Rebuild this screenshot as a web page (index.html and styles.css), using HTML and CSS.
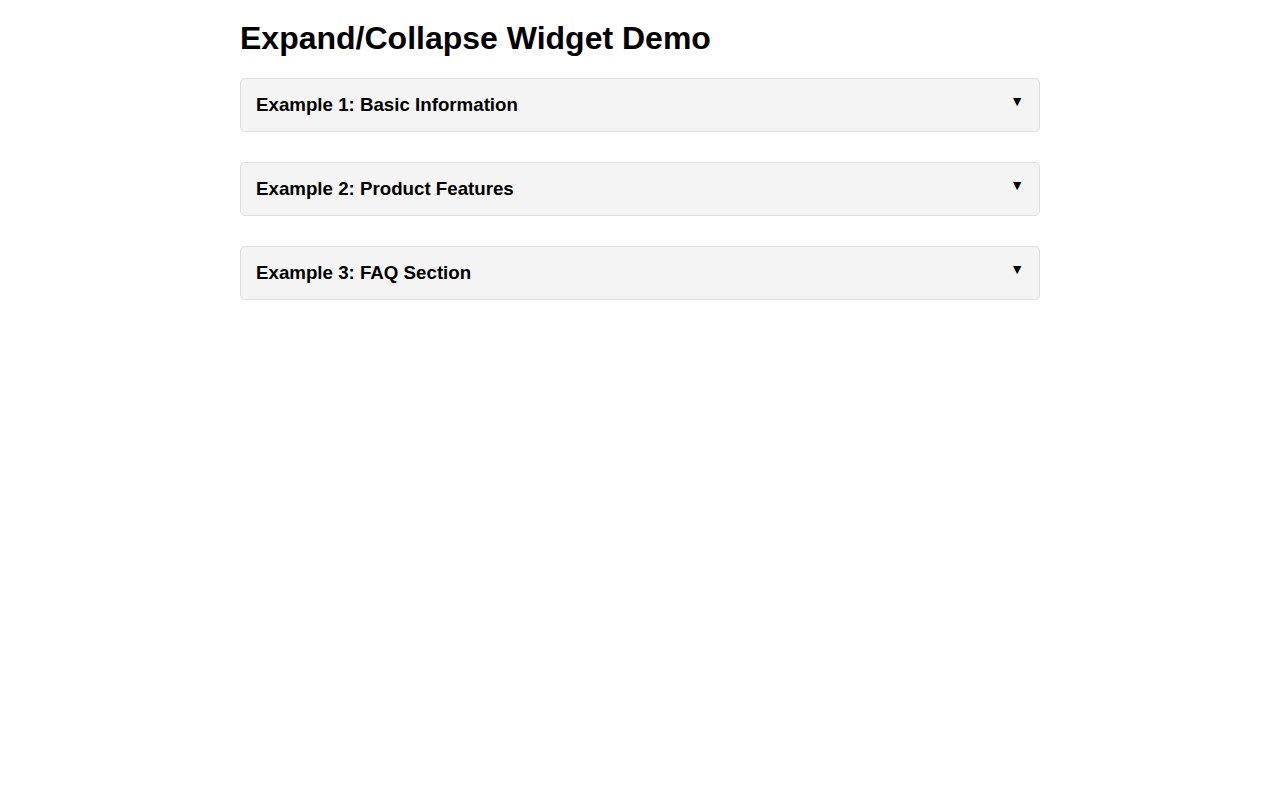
FILE: index.html
```html
<!DOCTYPE html>
<html lang="en">
<head>
<meta charset="utf-8">
<title>Expand/Collapse Widget Demo</title>
<link rel="stylesheet" href="styles.css">
</head>
<body>
<div class="container">
  <h1 class="title">Expand/Collapse Widget Demo</h1>
  <div class="panel">
    <div class="panel-header">Example 1: Basic Information<span class="arrow">▼</span></div>
  </div>
  <div class="panel">
    <div class="panel-header">Example 2: Product Features<span class="arrow">▼</span></div>
  </div>
  <div class="panel">
    <div class="panel-header">Example 3: FAQ Section<span class="arrow">▼</span></div>
  </div>
</div>
</body>
</html>
```

FILE: styles.css
```css
html, body {
  margin: 0;
  padding: 0;
  background: #fff;
}
body {
  font-family: "Liberation Sans", Arial, sans-serif;
  color: #000;
}
.container {
  width: 800px;
  margin: 0 auto;
  padding: 20px 0;
}
.title {
  font-size: 32px;
  font-weight: bold;
  margin: 0 0 21px 0;
  line-height: 37px;
}
.panel {
  border: 1px solid #ddd;
  border-radius: 5px;
  background: #f4f4f4;
  margin-bottom: 30px;
}
.panel-header {
  position: relative;
  padding: 15px 15px 16px 15px;
  font-size: 18.72px;
  font-weight: bold;
  line-height: 21px;
}
.arrow {
  position: absolute;
  right: 15px;
  top: 14px;
  font-size: 14px;
  line-height: 16px;
}
```
